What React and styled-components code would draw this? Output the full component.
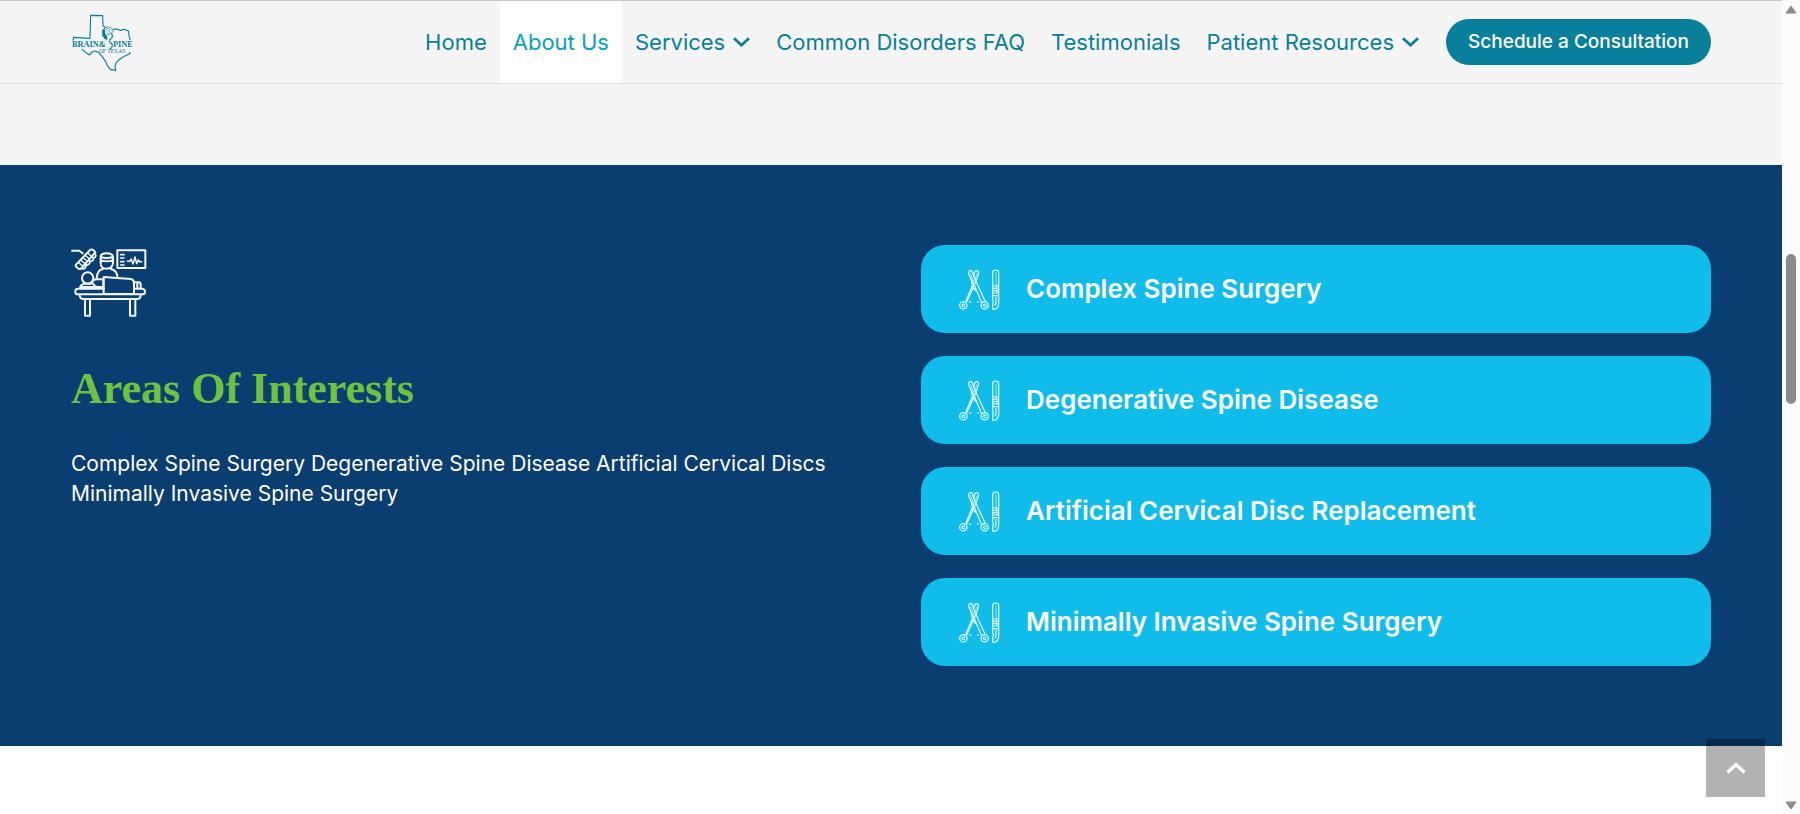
import React from "react";
import styled, { createGlobalStyle } from "styled-components";

const TEAL = "#087f9b";
const NAVY = "#0a3d70";
const SKY = "#10bdea";

const GlobalStyle = createGlobalStyle`
  *, *::before, *::after { box-sizing: border-box; }
  body {
    margin: 0;
    background: #fff;
    font-family: Inter, "Noto Sans", sans-serif;
    -webkit-font-smoothing: antialiased;
  }
  h2, h3, p, ul { margin: 0; padding: 0; }
`;

const Shell = styled.div`
  display: flex;
  min-height: 100vh;
`;

const Page = styled.div`
  flex: 1;
  min-width: 0;
  background: #fff;
`;

const Header = styled.header`
  display: flex;
  align-items: stretch;
  justify-content: space-between;
  height: 84px;
  padding: 0 71px;
  background: #f5f5f5;
  border-top: 1px solid #c8c8c8;
  border-bottom: 1px solid #dedede;
`;

const LogoLink = styled.a`
  display: flex;
  align-items: center;
  svg { display: block; width: 63px; height: 59px; }
`;

const Nav = styled.nav`
  display: flex;
  align-items: stretch;
`;

const NavItem = styled.a`
  display: flex;
  align-items: center;
  gap: 8px;
  padding: 0 13px;
  font-size: 22px;
  font-weight: 400;
  line-height: 30px;
  white-space: nowrap;
  text-decoration: none;
  color: ${(p) => (p.$active ? "#06a0c4" : TEAL)};
  background: ${(p) => (p.$active ? "#fff" : "transparent")};
`;

const ConsultButton = styled.button`
  align-self: center;
  height: 46px;
  margin-left: 14px;
  padding: 0 22px;
  border: 0;
  border-radius: 23px;
  background: ${TEAL};
  color: #fff;
  font: 500 19px/30px Inter, "Noto Sans", sans-serif;
  white-space: nowrap;
`;

const Spacer = styled.div`
  height: 81px;
  background: #f5f5f5;
`;

const Interests = styled.section`
  display: grid;
  grid-template-columns: 1fr 1fr;
  gap: 60px;
  padding: 80px 71px;
  background: ${NAVY};
`;

const Intro = styled.div`
  display: flex;
  flex-direction: column;
  align-items: flex-start;
  > svg { display: block; width: 76px; height: 74px; }
`;

const Heading = styled.h2`
  margin-top: 40px;
  color: #6dc23f;
  font: 700 44px/60px "Liberation Serif", serif;
  white-space: nowrap;
`;

const Copy = styled.p`
  margin-top: 30px;
  color: #fff;
  font-size: 21px;
  line-height: 30px;
`;

const CardList = styled.ul`
  display: flex;
  flex-direction: column;
  gap: 23px;
  list-style: none;
`;

const Card = styled.li`
  display: flex;
  align-items: center;
  gap: 26px;
  height: 88px;
  padding: 0 38px;
  border-radius: 24px;
  background: ${SKY};
  svg { display: block; width: 41px; height: 41px; flex: none; }
`;

const CardTitle = styled.h3`
  color: #fff;
  font-size: 26px;
  font-weight: 600;
  line-height: 30px;
`;

const TopButton = styled.button`
  position: fixed;
  right: 35px;
  bottom: 17px;
  display: flex;
  align-items: center;
  justify-content: center;
  width: 59px;
  height: 58px;
  padding: 0;
  border: 0;
  background: rgba(0, 0, 0, 0.3);
`;

const Rail = styled.div`
  position: sticky;
  top: 0;
  display: flex;
  flex-direction: column;
  align-items: center;
  width: 18px;
  height: 100vh;
  padding: 5px 0 4px;
  background: #fcfcfc;
  svg { display: block; flex: none; }
`;

const Track = styled.div`
  display: flex;
  flex-direction: column;
  flex: 1;
  width: 10px;
  &::before { content: ""; flex: 240; }
  &::after { content: ""; flex: 396; }
`;

const Thumb = styled.div`
  height: 150px;
  border-radius: 5px;
  background: #8b8b8b;
`;

const Chevron = () => (
  <svg width="17" height="10" viewBox="0 0 17 10" fill="none" stroke="currentColor" strokeWidth="2.8" aria-hidden="true">
    <path d="M1 1.2 8.5 8.2 16 1.2" />
  </svg>
);

const Logo = () => (
  <svg viewBox="33 36 189 177" fill="none" role="img" aria-label="Brain and Spine of Texas">
    <path
      d="M39 119 41 109 90 112 92 43 128 44 129 75 139 80M159 85 172 84 180 88 193 85 206 91 207 105 211 118M211 153 208 159 193 166 180 174 169 184 165 195 167 208 151 205 142 194 137 181 126 166 115 154 104 150 96 153 88 162 77 154 65 144"
      stroke={TEAL}
      strokeWidth="3.4"
      strokeLinejoin="round"
    />
    <path d="M130 101C126 92 130 82 139 79 149 76 158 81 159 89 160 95 155 97 151 95 150 101 144 104 139 101" stroke="#4fa3b6" strokeWidth="3" />
    <path d="M135 85 145 81 150 87 157 87M137 91 145 88 150 93M141 97 148 97" stroke="#3f9bb0" strokeWidth="2" />
    <path d="M134 82C126 84 125 95 128 101L125 105 131 107 132 113 141 117 142 108 136 98Z" fill={TEAL} />
    <path d="M154 97C160 105 157 110 151 115 146 120 148 124 154 127 160 132 156 140 149 145" stroke={TEAL} strokeWidth="4.5" strokeDasharray="5 1.5" />
    <g fill={TEAL} fontFamily='"Liberation Serif", serif' fontWeight="700">
      <text x="36" y="137" fontSize="25">BRAIN&amp;</text>
      <text x="159" y="137" fontSize="25">PINE</text>
      <text x="116" y="155" fontSize="17" fontWeight="400">OF TEXAS</text>
    </g>
  </svg>
);

const SurgeryIcon = () => (
  <svg viewBox="33 30 228 222" fill="none" stroke="#f4f8fc" strokeWidth="6" strokeLinejoin="round" strokeLinecap="round" aria-hidden="true">
    <path d="M36 47H58L68 55" />
    <path d="M48 89 90 45Q96 41 101 46L106 52 65 99Q60 104 54 100L49 96Q46 92 48 89Z" />
    <path d="M56 83 68 93M63 76 75 86M70 69 82 79M77 62 89 72M84 55 96 65" strokeWidth="4" />
    <path d="M103 56Q111 59 105 67 99 70 98 67 104 75 94 79 88 79 88 77 92 87 82 90 77 89 77 87 80 98 70 102 64 102 63 100" strokeWidth="5" />
    <path d="M122 66Q122 55 140 55T159 66V82Q159 101 140 101T122 82ZM122 66Q140 72 159 66M122 76Q140 82 159 76" />
    <path d="M110 132Q110 105 130 101M151 101Q172 105 172 127" />
    <circle cx="83" cy="129" r="17" />
    <path d="M61 156Q65 147 73 146H94Q98 134 110 133H130V156H60" />
    <path d="M100 146Q103 156 114 156" />
    <path d="M131 126 213 132Q222 134 222 144V177H131Z" />
    <path d="M224 142H236Q242 142 242 149V159M232 144V158" />
    <path d="M131 161H53Q46 161 46 170T53 178H247Q255 178 255 170T247 161H224" />
    <path d="M59 180Q59 192 71 192H231Q242 192 242 180M75 194V242H90V194M210 194V242H226V194" />
    <rect x="172" y="46" width="84" height="53" />
    <path d="M182 59H192M182 69H192M182 80H192M182 90H192" strokeWidth="5" />
    <path d="M202 79H209L213 72 219 87 225 66 230 86 235 75 239 80H245" strokeWidth="4.5" />
  </svg>
);

const ToolsIcon = () => (
  <svg viewBox="57 40 123 123" fill="none" stroke="#eafaff" strokeWidth="3.6" strokeLinecap="round" strokeLinejoin="round" aria-hidden="true">
    <path d="M101 84 87 58Q84 47 91 44 96 43 98 50L101 62 104 50Q107 43 112 45 118 48 115 57L103 88 80 139" />
    <path d="M101 62 106 73 135 136M92 65 97 90 78 135M101 84 124 139M96 90 106 104" />
    <path d="M91 53 101 77M112 53 101 77" strokeWidth="2" />
    <circle cx="70" cy="149" r="11" />
    <circle cx="134" cy="149" r="11" />
    <path d="M74 146Q68 143 66 149 68 155 74 151M138 146Q132 143 130 149 132 155 138 151M88 139H93M112 139H116" />
    <path d="M158 120V51Q158 43 167 43T176 51V120" />
    <path d="M168 91V51" strokeWidth="2" />
    <path d="M159 91H168M159 98H168M159 105H168M171 89V111M158 112H176M158 120H176V142Q175 158 164 161H158V144L161 139 158 134V120M168 125V143L165 148" />
  </svg>
);

const NAV = [
  { label: "Home" },
  { label: "About Us", active: true },
  { label: "Services", menu: true },
  { label: "Common Disorders FAQ" },
  { label: "Testimonials" },
  { label: "Patient Resources", menu: true },
];

const AREAS = [
  "Complex Spine Surgery",
  "Degenerative Spine Disease",
  "Artificial Cervical Disc Replacement",
  "Minimally Invasive Spine Surgery",
];

export default function App() {
  return (
    <>
      <GlobalStyle />
      <Shell>
        <Page>
          <Header>
            <LogoLink href="#home">
              <Logo />
            </LogoLink>
            <Nav>
              {NAV.map((item) => (
                <NavItem key={item.label} href="#" $active={item.active} aria-current={item.active ? "page" : undefined}>
                  {item.label}
                  {item.menu && <Chevron />}
                </NavItem>
              ))}
              <ConsultButton type="button">Schedule a Consultation</ConsultButton>
            </Nav>
          </Header>
          <Spacer />
          <Interests>
            <Intro>
              <SurgeryIcon />
              <Heading>Areas Of Interests</Heading>
              <Copy>
                Complex Spine Surgery Degenerative Spine Disease Artificial Cervical Discs
                Minimally Invasive Spine Surgery
              </Copy>
            </Intro>
            <CardList>
              {AREAS.map((area) => (
                <Card key={area}>
                  <ToolsIcon />
                  <CardTitle>{area}</CardTitle>
                </Card>
              ))}
            </CardList>
          </Interests>
        </Page>
        <Rail aria-hidden="true">
          <svg width="12" height="9" viewBox="0 0 12 9">
            <path d="M6 1 11 8H1Z" fill="#8b8b8b" stroke="#8b8b8b" strokeLinejoin="round" />
          </svg>
          <Track>
            <Thumb />
          </Track>
          <svg width="12" height="9" viewBox="0 0 12 9">
            <path d="M6 8 11 1H1Z" fill="#8b8b8b" stroke="#8b8b8b" strokeLinejoin="round" />
          </svg>
        </Rail>
      </Shell>
      <TopButton type="button" aria-label="Back to top">
        <svg width="20" height="12" viewBox="0 0 20 12" fill="none" stroke="#fff" strokeWidth="3.4" aria-hidden="true">
          <path d="M1.5 10.5 10 2.5 18.5 10.5" />
        </svg>
      </TopButton>
    </>
  );
}
